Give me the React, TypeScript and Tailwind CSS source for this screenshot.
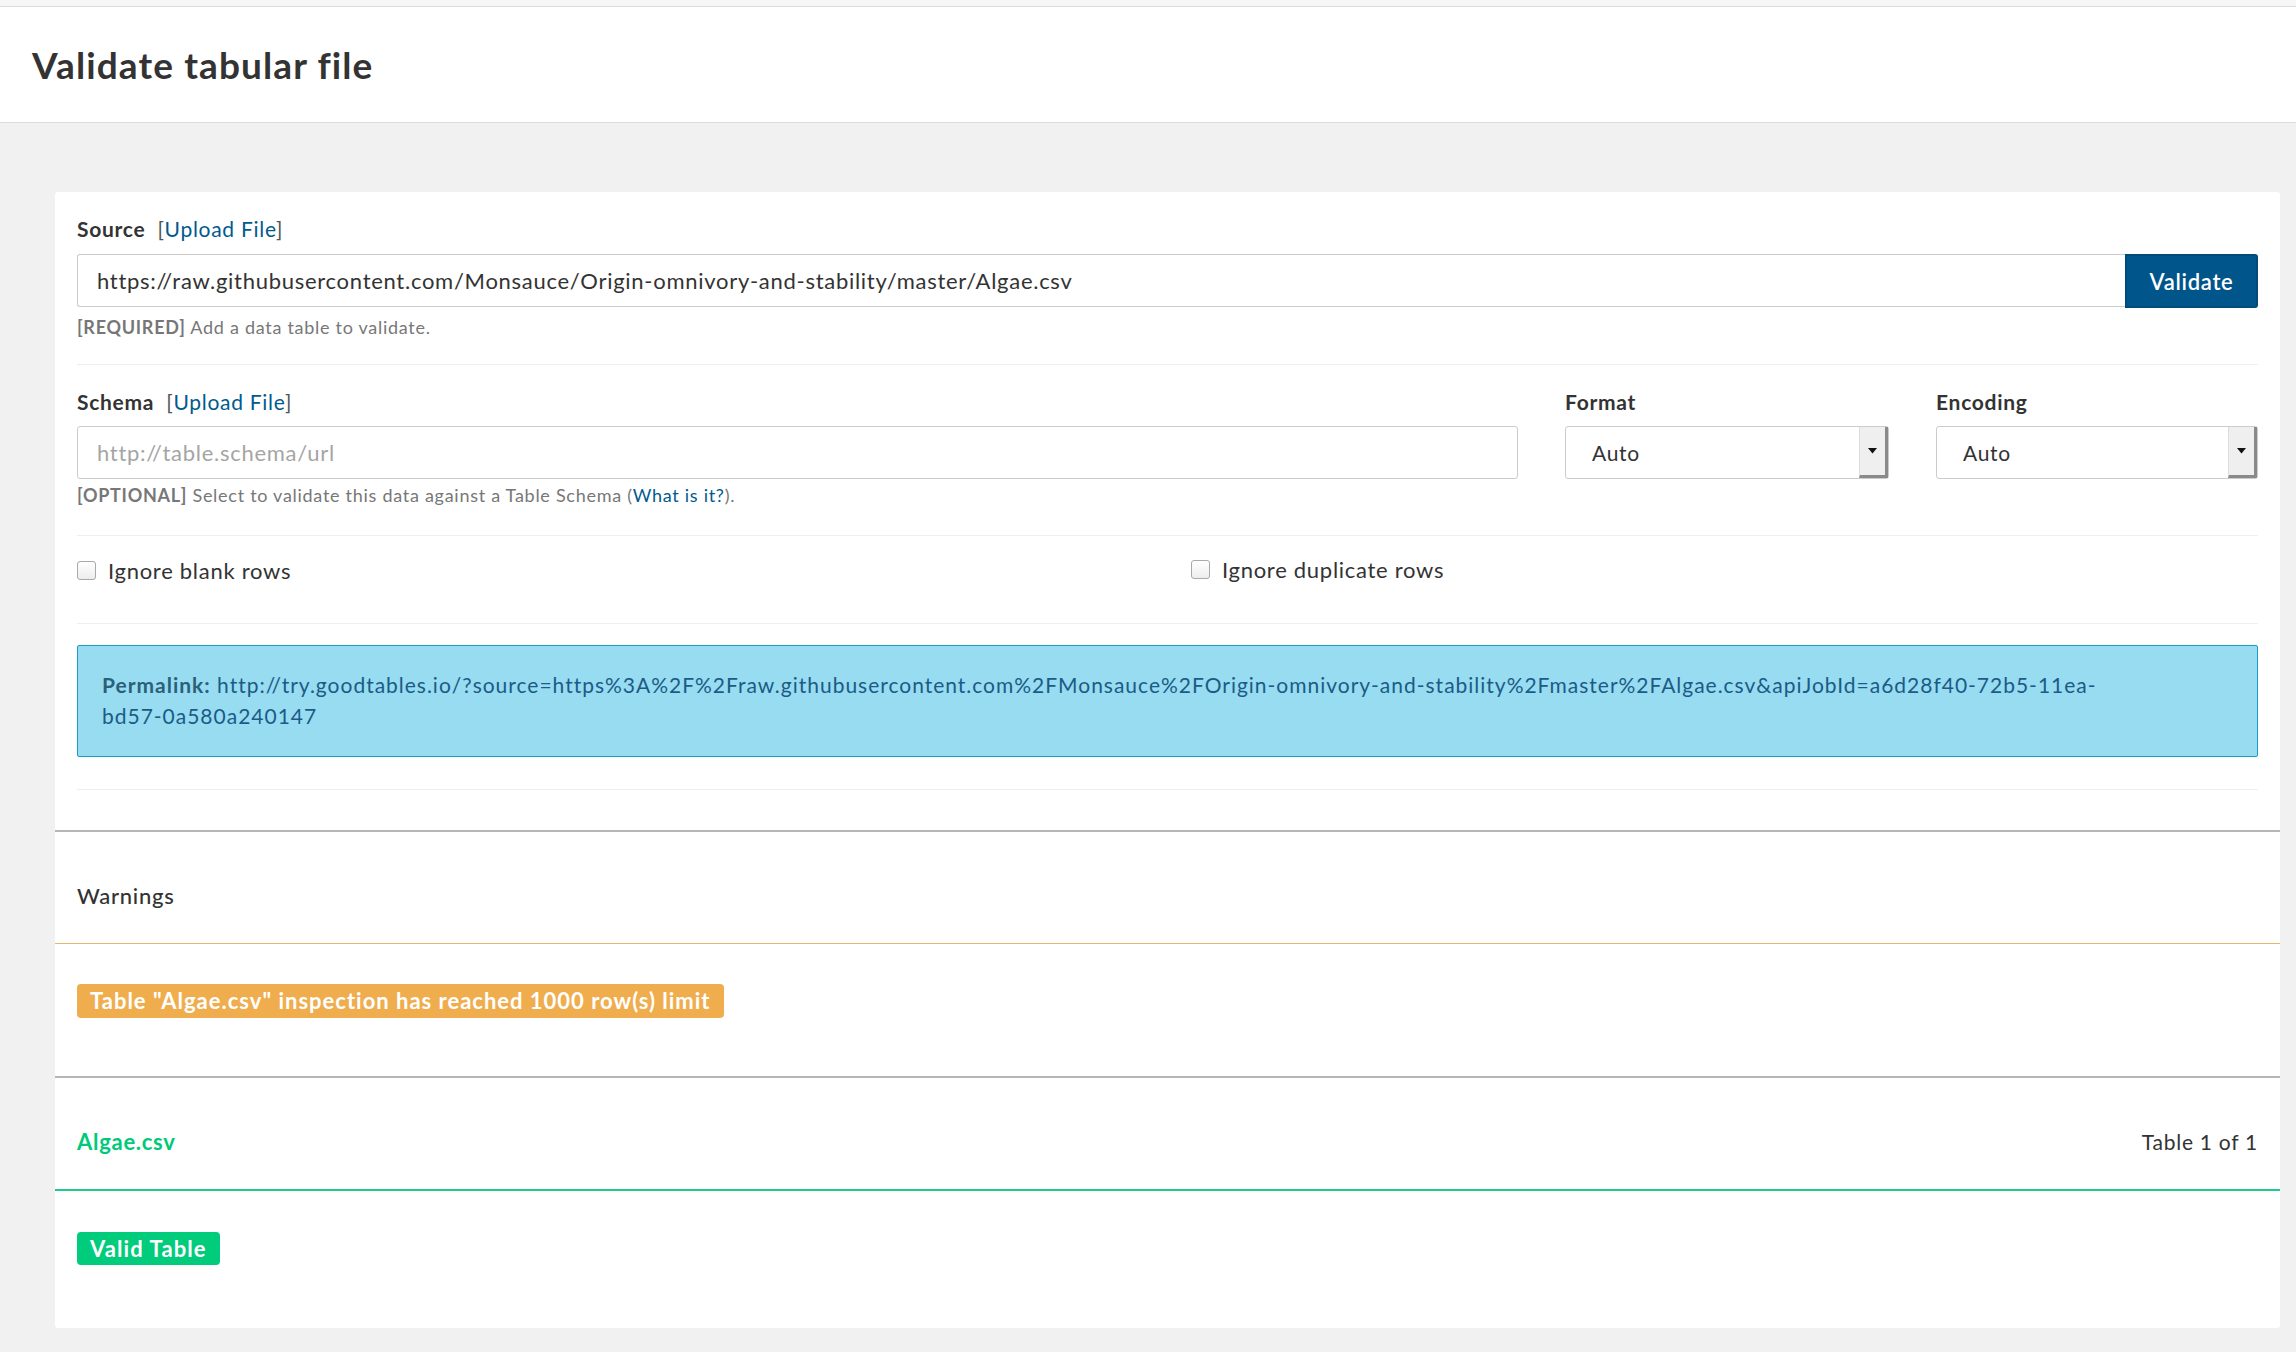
import React from 'react';

const SelectBox: React.FC<{ label: string; width: string }> = ({ label, width }) => (
  <div className={`flex flex-col ${width}`}>
    <label className="h-[30px] leading-[30px] text-[21px] font-bold text-[#333]">{label}</label>
    <div className="mt-[9px] h-[53px] flex items-stretch border border-[#ccc] rounded-[3px] bg-white">
      <div className="flex-1 flex items-center pl-[26px] text-[21px] text-[#333]">Auto</div>
      <div className="w-[29px] bg-[#efefef] border-l border-[#ddd] border-r-[3px] border-b-[3px] border-r-[#8a8a8a] border-b-[#8a8a8a] flex items-center justify-center">
        <svg width="9" height="6" viewBox="0 0 9 6">
          <path d="M0 0 L9 0 L4.5 5.5 Z" fill="#111" />
        </svg>
      </div>
    </div>
  </div>
);

const Checkbox: React.FC<{ label: string }> = ({ label }) => (
  <label className="flex items-center gap-[12px] text-[22px] text-[#333]">
    <span className="w-[19px] h-[19px] rounded-[3px] border border-[#a9a9a9] bg-gradient-to-b from-white to-[#ededed]" />
    {label}
  </label>
);

const App: React.FC = () => {
  return (
    <div className="min-h-screen bg-[#f1f1f1] font-['Lato',sans-serif] tracking-[0.045em] text-[#333]">
      {/* top strip + header */}
      <div className="h-[7px] bg-[#f6f6f6] border-b border-[#dcdcdc]" />
      <header className="h-[116px] bg-white border-b border-[#dcdcdc] flex items-center px-[32px]">
        <h1 className="text-[37px] font-bold text-[#333] tracking-[0.03em]">Validate tabular file</h1>
      </header>

      <div className="pl-[55px] pr-[16px] pt-[69px] pb-[24px]">
        <div className="bg-white rounded-[3px]">
          {/* Form */}
          <div className="px-[22px] pt-[22px] pb-[40px]">
            {/* Source */}
            <div className="h-[30px] leading-[30px] text-[21px]">
              <span className="font-bold">Source</span>
              <span className="ml-[12px] text-[#555]">[</span>
              <a className="text-[#005a8e]">Upload File</a>
              <span className="text-[#555]">]</span>
            </div>
            <div className="mt-[10px] flex">
              <div className="flex-1 h-[53px] flex items-center pl-[19px] border border-[#ccc] border-r-0 rounded-l-[3px] text-[22px] text-[#333]">
                https://raw.githubusercontent.com/Monsauce/Origin-omnivory-and-stability/master/Algae.csv
              </div>
              <button className="w-[133px] h-[54px] bg-[#00558a] border-2 border-[#004b7a] rounded-r-[3px] text-white text-[22px] font-semibold">
                Validate
              </button>
            </div>
            <p className="mt-[6px] leading-[26px] text-[18px] tracking-[0.04em] text-[#777]">
              <span className="font-bold">[REQUIRED]</span> Add a data table to validate.
            </p>
            <div className="mt-[24px] border-t border-[#eee]" />

            {/* Schema / Format / Encoding */}
            <div className="mt-[22px] flex gap-[47px]">
              <div className="flex-1 flex flex-col">
                <div className="h-[30px] leading-[30px] text-[21px]">
                  <span className="font-bold">Schema</span>
                  <span className="ml-[12px] text-[#555]">[</span>
                  <a className="text-[#005a8e]">Upload File</a>
                  <span className="text-[#555]">]</span>
                </div>
                <div className="mt-[9px] h-[53px] flex items-center pl-[19px] border border-[#ccc] rounded-[3px] text-[22px] text-[#a5a5a5]">
                  http://table.schema/url
                </div>
                <p className="mt-[3px] leading-[26px] text-[18px] tracking-[0.04em] text-[#777]">
                  <span className="font-bold">[OPTIONAL]</span> Select to validate this data against a Table Schema (
                  <a className="text-[#005a8e]">What is it?</a>).
                </p>
              </div>
              <SelectBox label="Format" width="w-[324px]" />
              <SelectBox label="Encoding" width="w-[322px]" />
            </div>
            <div className="mt-[27px] border-t border-[#eee]" />

            {/* Options */}
            <div className="mt-[18px] h-[30px] flex">
              <div className="w-[1114px]">
                <Checkbox label="Ignore blank rows" />
              </div>
              <Checkbox label="Ignore duplicate rows" />
            </div>
            <div className="mt-[39px] border-t border-[#eee]" />

            {/* Permalink */}
            <div className="mt-[21px] bg-[#97dcf1] border border-[#1c9bc8] rounded-[2px] px-[24px] pt-[23px] pb-[25px] text-[21px] leading-[31px] tracking-[0.047em] text-[#1b5b85]">
              <span className="whitespace-nowrap">
                <span className="font-bold text-[#2b6079]">Permalink:</span>{' '}
                http://try.goodtables.io/?source=https%3A%2F%2Fraw.githubusercontent.com%2FMonsauce%2FOrigin-omnivory-and-stability%2Fmaster%2FAlgae.csv&amp;apiJobId=a6d28f40-72b5-11ea-
              </span>
              <br />
              bd57-0a580a240147
            </div>
            <div className="mt-[32px] border-t border-[#eee]" />
          </div>

          {/* Warnings */}
          <div className="border-t-2 border-[#b5b5b5] h-[113px] px-[22px] flex items-center pt-[16px]">
            <h3 className="text-[22px] font-medium text-[#333]">Warnings</h3>
          </div>
          <div className="border-t border-[#e9b66f] px-[22px] pt-[40px] pb-[58px]">
            <span className="inline-block h-[34px] leading-[34px] px-[13px] rounded-[4px] bg-[#f0ad4e] text-white text-[22px] font-bold tracking-[0.045em]">
              Table "Algae.csv" inspection has reached 1000 row(s) limit
            </span>
          </div>

          {/* Table */}
          <div className="border-t-2 border-[#b5b5b5] h-[113px] px-[22px] flex items-center justify-between pt-[16px]">
            <h3 className="text-[22px] font-bold text-[#00c97a]">Algae.csv</h3>
            <span className="text-[21px] text-[#333] tracking-[0.035em]">Table 1 of 1</span>
          </div>
          <div className="border-t-2 border-[#22cc88] px-[22px] pt-[41px] pb-[63px]">
            <span className="inline-block h-[33px] leading-[33px] px-[13px] rounded-[4px] bg-[#00cc7c] text-white text-[22px] font-bold tracking-[0.05em]">
              Valid Table
            </span>
          </div>
        </div>
      </div>
    </div>
  );
};

export default App;
